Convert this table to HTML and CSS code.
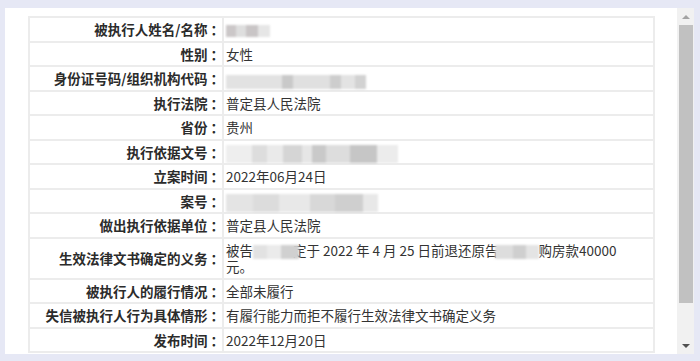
FILE: index.html
```html
<!DOCTYPE html>
<html lang="zh-CN">
<head>
<meta charset="utf-8">
<title>失信被执行人详情</title>
<link rel="stylesheet" href="styles.css">
</head>
<body>
<div class="page">
  <div class="panel">
    <div class="content">
      <table class="info">
        <tr><th>被执行人姓名/名称<span class="colon">：</span></th><td><span class="mask m-name"></span></td></tr>
        <tr><th>性别<span class="colon">：</span></th><td>女性</td></tr>
        <tr><th>身份证号码/组织机构代码<span class="colon">：</span></th><td><span class="mask m-id"></span></td></tr>
        <tr><th>执行法院<span class="colon">：</span></th><td>普定县人民法院</td></tr>
        <tr><th>省份<span class="colon">：</span></th><td>贵州</td></tr>
        <tr><th>执行依据文号<span class="colon">：</span></th><td><span class="mask m-doc"></span></td></tr>
        <tr><th>立案时间<span class="colon">：</span></th><td>2022年06月24日</td></tr>
        <tr><th>案号<span class="colon">：</span></th><td><span class="mask m-case"></span></td></tr>
        <tr><th>做出执行依据单位<span class="colon">：</span></th><td>普定县人民法院</td></tr>
        <tr><th>生效法律文书确定的义务<span class="colon">：</span></th><td><span class="line">被告<span class="mask m-p1"></span>定于 2022 年 4 月 25 日前退还原告<span class="mask m-p2"></span>购房款40000</span><span class="line">元。</span></td></tr>
        <tr><th>被执行人的履行情况<span class="colon">：</span></th><td>全部未履行</td></tr>
        <tr><th>失信被执行人行为具体情形<span class="colon">：</span></th><td>有履行能力而拒不履行生效法律文书确定义务</td></tr>
        <tr><th>发布时间<span class="colon">：</span></th><td>2022年12月20日</td></tr>
      </table>
    </div>
    <div class="scrollbar">
      <div class="sb-btn"><span class="arrow-up"></span></div>
      <div class="sb-track"><div class="sb-thumb"></div></div>
      <div class="sb-btn"><span class="arrow-down"></span></div>
    </div>
  </div>
</div>
</body>
</html>
```
FILE: styles.css
```css
* { box-sizing: border-box; }
html, body { margin: 0; padding: 0; }
body {
  background: #e6e8f5;
  font-family: "Noto Sans CJK SC", sans-serif;
  color: #333;
}
.page {
  width: 700px;
  height: 361px;
  padding: 8px 6px 7px 5px;
}
.panel {
  display: flex;
  height: 346px;
  background: #fff;
}
.content {
  flex: 1;
  overflow: hidden;
  padding: 8px 0 0 23px;
}
.info {
  width: 627px;
  border-collapse: separate;
  border-spacing: 0;
  border: 1px solid #ececec;
  font-size: 13.5px;
  line-height: 16.5px;
}
.info th, .info td {
  border: 1px solid #ececec;
  padding: 3px 0;
  height: 24.5px;
  vertical-align: middle;
}
.info th {
  width: 194px;
  text-align: right;
  font-weight: bold;
  padding-right: 1px;
  color: #2b2b2b;
  white-space: nowrap;
}
.colon {
  margin-left: 3px;
  margin-right: -3px;
}
.info td {
  text-align: left;
  padding-left: 2px;
  padding-right: 4px;
  color: #333;
}
.line {
  display: block;
  white-space: nowrap;
}
.mask {
  display: inline-block;
  vertical-align: middle;
  filter: blur(1px);
  margin-top: -4px;
  margin-bottom: -4px;
}
.m-name {
  width: 44px; height: 12px;
  background: linear-gradient(90deg, #cbc7c8 0 22%, #dedede 22% 45%, #c9c5c6 45% 72%, #e6e6e6 72%);
}
.m-id {
  width: 140px; height: 14px;
  position: relative; top: 2px;
  background: linear-gradient(90deg, #e2e2e2 0 40%, #c9c9c9 40% 48%, #e0e0e0 48% 74%, #cdcdcd 74% 82%, #e3e3e3 82% 92%, #d2d2d2 92%);
}
.m-doc {
  width: 172px; height: 18px;
  background: linear-gradient(90deg, #eeeeee 0 15%, #dddddd 15% 24%, #eaeaea 24% 33%, #d5d5d5 33% 44%, #e6e6e6 44% 50%, #c9c9c9 50% 58%, #dddddd 58% 72%, #c6c6c6 72% 88%, #ececec 88%);
}
.m-case {
  width: 152px; height: 18px;
  background: linear-gradient(90deg, #e4e4e4 0 18%, #dcdcdc 18% 35%, #e8e8e8 35% 55%, #d8d8d8 55% 72%, #cfcfcf 72% 90%, #e8e8e8 90%);
}
.m-p1 {
  width: 46px; height: 14px;
  margin-right: -6px;
  background: linear-gradient(90deg, #e2e2e2 0 30%, #ebebeb 30% 60%, #d0d0d0 60%);
}
.m-p2 {
  width: 44px; height: 14px;
  margin-left: -4px;
  background: linear-gradient(90deg, #dddddd 0 40%, #cfcfcf 40% 70%, #e4e4e4 70%);
}
.scrollbar {
  width: 17px;
  display: flex;
  flex-direction: column;
  background: #f1f1f1;
}
.sb-btn {
  height: 17px;
  display: flex;
  align-items: center;
  justify-content: center;
}
.sb-track {
  flex: 1;
  display: flex;
  flex-direction: column;
  padding: 0 1px 34px 2px;
}
.sb-thumb {
  flex: 1;
  background: #c1c1c1;
}
.arrow-up {
  width: 0; height: 0;
  border-left: 4px solid transparent;
  border-right: 4px solid transparent;
  border-bottom: 4px solid #a3a3a3;
}
.arrow-down {
  width: 0; height: 0;
  border-left: 4px solid transparent;
  border-right: 4px solid transparent;
  border-top: 4px solid #505050;
}
```
